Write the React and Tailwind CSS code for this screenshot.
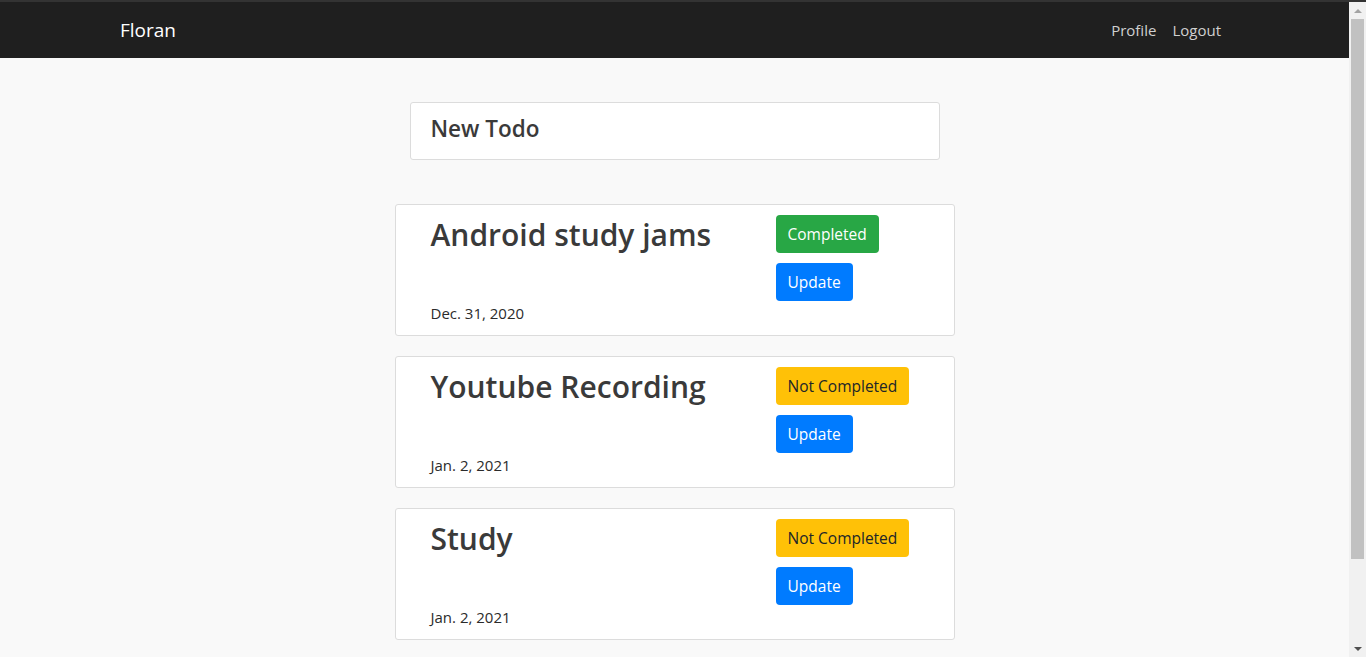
import React from 'react';

const todos = [
  { title: 'Android study jams', done: true, date: 'Dec. 31, 2020' },
  { title: 'Youtube Recording', done: false, date: 'Jan. 2, 2021' },
  { title: 'Study', done: false, date: 'Jan. 2, 2021' },
];

const TodoCard = ({ todo }) => (
  <div className="w-[560px] h-[132px] bg-white border border-[#dcdcdc] rounded-[3px] flex pl-[35px] pt-[10px] pb-[10px]">
    <div className="w-[345px] flex flex-col justify-between">
      <h2 className="text-[30px] leading-[38px] font-semibold text-[#3a3a3a] mt-[1px]">{todo.title}</h2>
      <p className="text-[15px] leading-[24px] text-[#2b2b2b]">{todo.date}</p>
    </div>
    <div className="flex flex-col items-start gap-[10px]">
      {todo.done ? (
        <button className="h-[38px] px-[12px] pt-[1px] rounded-[4px] bg-[#28a745] text-white text-[15.5px]">Completed</button>
      ) : (
        <button className="h-[38px] px-[12px] pt-[1px] rounded-[4px] bg-[#ffc107] text-[#212529] text-[15.5px]">Not Completed</button>
      )}
      <button className="h-[38px] px-[12px] pt-[1px] rounded-[4px] bg-[#007bff] text-white text-[15.5px]">Update</button>
    </div>
  </div>
);

export default function App() {
  return (
    <div className="h-[657px] w-[1366px] flex overflow-hidden border-t-2 border-[#333333] bg-[#f9f9f9] font-['Open_Sans',sans-serif]">
      <div className="flex-1 flex flex-col">
        <nav className="h-[56px] bg-[#1f1f1f] flex items-center justify-between pl-[120px] pr-[128px]">
          <a className="text-white text-[19px] leading-[30px]">Floran</a>
          <div className="flex gap-[16px] text-[15px] text-[#d0d0d0]">
            <a>Profile</a>
            <a>Logout</a>
          </div>
        </nav>
        <main className="flex flex-col items-center pt-[44px]">
          <div className="w-[530px] h-[58px] bg-white border border-[#dcdcdc] rounded-[3px] flex items-center pl-[20px] pb-[5px]">
            <h4 className="text-[22.5px] font-semibold text-[#3a3a3a] leading-[28px]">New Todo</h4>
          </div>
          <div className="flex flex-col gap-[20px] mt-[44px]">
            {todos.map((t) => (
              <TodoCard key={t.title} todo={t} />
            ))}
          </div>
        </main>
      </div>
      <div className="w-[17px] bg-[#f1f1f1] flex flex-col items-center">
        <div className="h-[17px] flex items-center justify-center">
          <div className="w-0 h-0 border-l-[4px] border-r-[4px] border-b-[4px] border-l-transparent border-r-transparent border-b-[#a3a3a3]" />
        </div>
        <div className="w-[13px] h-[540px] bg-[#c1c1c1]" />
        <div className="flex-1" />
        <div className="h-[17px] flex items-center justify-center">
          <div className="w-0 h-0 border-l-[4px] border-r-[4px] border-t-[4px] border-l-transparent border-r-transparent border-t-[#505050]" />
        </div>
      </div>
    </div>
  );
}
